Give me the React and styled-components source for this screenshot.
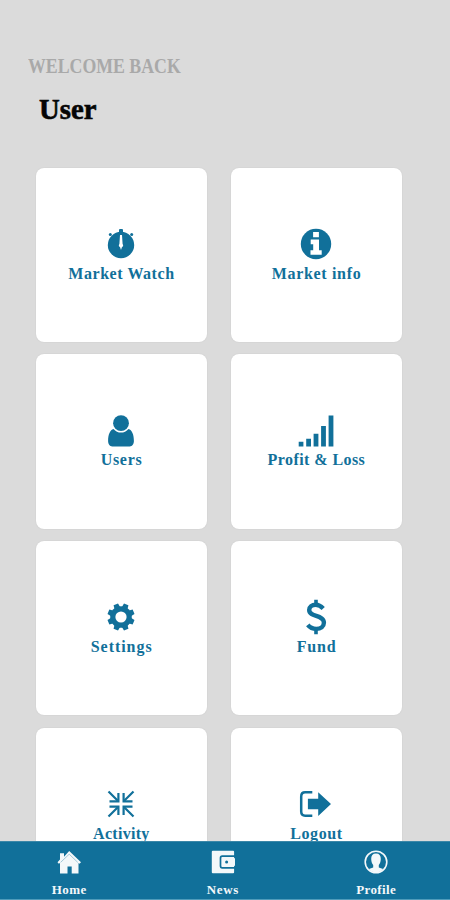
import React from "react";
import styled, { createGlobalStyle } from "styled-components";

const TEAL = "#11709a";

const GlobalStyle = createGlobalStyle`
  * { box-sizing: border-box; }
  html, body { margin: 0; padding: 0; background: #dbdbdb; }
`;

const Screen = styled.div`
  display: flex;
  flex-direction: column;
  width: 450px;
  height: 900px;
  overflow: hidden;
  background: #dbdbdb;
  font-family: "Liberation Serif", "Times New Roman", serif;
`;

const Content = styled.main`
  flex: 1;
  min-height: 0;
  overflow: hidden;
`;

const Header = styled.header`
  height: 167.5px;
  padding: 54px 0 0 28px;
`;

const Greeting = styled.p`
  margin: 0;
  width: max-content;
  font-size: 20px;
  line-height: 24px;
  font-weight: 700;
  color: #a9a9a9;
  transform: scaleX(${(p) => p.$stretch});
  transform-origin: left center;
`;

const UserName = styled.h1`
  margin: 14px 0 0 11px;
  width: max-content;
  font-size: 29px;
  line-height: 34px;
  font-weight: 700;
  color: #050505;
  -webkit-text-stroke: 0.6px #050505;
  transform: scaleX(${(p) => p.$stretch});
  transform-origin: left center;
`;

const CardGrid = styled.section`
  display: grid;
  grid-template-columns: 171px 171px;
  grid-auto-rows: 174.5px;
  gap: 12.2px 24px;
  padding-left: 35.7px;
`;

const Card = styled.div`
  display: flex;
  flex-direction: column;
  align-items: center;
  padding-top: 58.5px;
  border-radius: 8px;
  background: #fff;
  box-shadow: 0 0 1.5px rgba(0, 0, 0, 0.1);
  color: ${TEAL};
`;

const CardIcon = styled.svg`
  display: block;
  flex: none;
  width: 36px;
  height: 36px;
  overflow: visible;
`;

const CardLabel = styled.span`
  margin-top: 0.5px;
  font-size: 16px;
  line-height: 22px;
  font-weight: 700;
  white-space: nowrap;
  letter-spacing: ${(p) => p.$spacing}px;
  margin-right: ${(p) => -p.$spacing}px;
`;

const NavBar = styled.nav`
  display: flex;
  justify-content: space-between;
  flex: none;
  height: 59px;
  padding: 8px 44px 0 39px;
  border-top: 1px solid #3b87a8;
  border-bottom: 1px solid #4f9cbb;
  background: ${TEAL};
`;

const NavItem = styled.div`
  display: flex;
  flex-direction: column;
  align-items: center;
  width: 60px;
  color: #f4f8fa;
`;

const NavIcon = styled.svg`
  display: block;
  flex: none;
  width: 24px;
  height: 24px;
`;

const NavLabel = styled.span`
  margin-top: 8px;
  font-size: 13px;
  line-height: 16px;
  font-weight: 700;
  letter-spacing: ${(p) => p.$spacing}px;
  margin-right: ${(p) => -p.$spacing}px;
`;

const Stopwatch = () => (
  <g fill="currentColor">
    <circle cx="18" cy="19" r="13.2" />
    <rect x="16" y="3" width="4" height="4" rx="1" />
    <circle cx="7.3" cy="8.6" r="1.5" />
    <circle cx="28.7" cy="8.6" r="1.5" />
    <path d="M17 9h2l.6 9a2.3 2.3 0 0 1-.7 3.3L18 24l-.9-2.7a2.3 2.3 0 0 1-.7-3.3Z" fill="#fff" />
  </g>
);

const Info = () => (
  <g>
    <circle cx="18" cy="18" r="15.2" fill="currentColor" />
    <path d="M15.1 6h5.8v5.2h-5.8ZM12.7 13.6H21v10.6h2.7v4.6H12.5v-4.6h2.7v-6h-2.5Z" fill="#fff" />
  </g>
);

const Person = () => (
  <g fill="currentColor">
    <circle cx="18" cy="10.2" r="7.9" />
    <path d="M10.5 15.9c4 4.9 11 4.9 15 0 3.4 1 5.4 5.3 5.4 12.2 0 3-1.6 5.3-4.2 5.3H9.3c-2.6 0-4.2-2.3-4.2-5.3 0-6.9 2-11.2 5.4-12.2Z" />
  </g>
);

const Bars = () => (
  <path
    fill="currentColor"
    d="M.7 28.8h4.7v4.7H.7ZM8.2 25.8h4.8v7.7H8.2ZM15.6 20.8h4.8v12.7h-4.8ZM23.1 13h4.8v20.5h-4.8ZM30.6 2.5h4.8v31h-4.8Z"
  />
);

const Gear = () => (
  <g>
    <g fill="currentColor">
      <circle cx="18" cy="18" r="10.8" />
      {[22.5, 67.5, 112.5, 157.5, 202.5, 247.5, 292.5, 337.5].map((angle) => (
        <path key={angle} d="M14.9 9 15.6 4.4h4.8L21.1 9Z" transform={`rotate(${angle} 18 18)`} />
      ))}
    </g>
    <circle cx="18" cy="18" r="5.6" fill="#fff" />
  </g>
);

const Dollar = () => (
  <g fill="none" stroke="currentColor">
    <path d="M18 .7v5M18 30.3v5" strokeWidth="3.6" />
    <path
      d="M25.2 9.6C22.7 6.9 20.4 5.8 17.8 5.8c-4 0-6.6 2.1-6.6 5.2 0 7.5 14.7 4.4 14.7 12.7 0 3.8-3.2 6.2-7.6 6.2-3.5 0-6.3-1.2-8.5-4"
      strokeWidth="4.4"
    />
  </g>
);

const Compress = () => (
  <g fill="none" stroke="currentColor" strokeWidth="2.2">
    <path d="m5.5 5.5 9.3 9.3M30.5 5.5l-9.3 9.3M5.5 30.5l9.3-9.3M30.5 30.5l-9.3-9.3" />
    <path d="M15.4 7v8.4H6.5M20.6 7v8.4h8.9M15.4 29v-8.4H6.5M20.6 29v-8.4h8.9" />
  </g>
);

const Exit = () => (
  <g>
    <path
      d="M14.3 6.2H7.2c-2.6 0-4 1.5-4 4.2v15.2c0 2.7 1.4 4.2 4 4.2h7.1"
      fill="none"
      stroke="currentColor"
      strokeWidth="2.5"
    />
    <path d="M9.9 12.7h10.3V6.2L33 18 20.2 30v-6.7H9.9Z" fill="currentColor" />
  </g>
);

const House = () => (
  <g>
    <path
      d="M3 3.3h4v3.4L12.2 1 24 12.2l-1.5 1.6-1-.8V23.5h-6.8v-7h-4.2v7H3V13l-1.2.8L.5 12.2 3 9.5Z"
      fill="currentColor"
    />
    <path d="m3.6 12.4 8.6-8.2 8.6 8.2" fill="none" stroke={TEAL} strokeWidth=".6" strokeOpacity=".6" />
  </g>
);

const Wallet = () => (
  <g>
    <path d="M1.8.7h20.3q1 0 1 1v20.6q0 1-1 1H1.8q-1 0-1-1V1.7q0-1 1-1Z" fill="currentColor" />
    <path d="M24 6.2H11.2q-1.7 0-1.7 1.7v8.2q0 1.7 1.7 1.7H24" fill="none" stroke={TEAL} strokeWidth="1.7" />
    <path d="M12 8.2h12v7.6H12Z" fill="currentColor" />
    <circle cx="15.6" cy="12" r="1.5" fill={TEAL} />
  </g>
);

const Avatar = () => (
  <g>
    <circle cx="12" cy="12" r="10.8" fill="none" stroke="currentColor" strokeWidth="1.6" />
    <path
      d="M12 3.6c3.3 0 4.9 2 4.8 5.5-.1 2.9-1 4.8-2 6v2.5l4.3 1.5c-3.6 4.6-10.6 4.6-14.2 0l4.3-1.5v-2.5c-1-1.2-1.9-3.1-2-6-.1-3.5 1.5-5.5 4.8-5.5Z"
      fill="currentColor"
    />
  </g>
);

const cards = [
  { label: "Market Watch", icon: Stopwatch, spacing: 0.55 },
  { label: "Market info", icon: Info, spacing: 0.68 },
  { label: "Users", icon: Person, spacing: 0.7 },
  { label: "Profit & Loss", icon: Bars, spacing: 0.43 },
  { label: "Settings", icon: Gear, spacing: 0.95 },
  { label: "Fund", icon: Dollar, spacing: 0.8 },
  { label: "Activity", icon: Compress, spacing: 0.3 },
  { label: "Logout", icon: Exit, spacing: 0.6 },
];

const tabs = [
  { label: "Home", icon: House, spacing: 0.4 },
  { label: "News", icon: Wallet, spacing: 0.6 },
  { label: "Profile", icon: Avatar, spacing: 0.4 },
];

export default function App() {
  return (
    <Screen>
      <GlobalStyle />
      <Content>
        <Header>
          <Greeting $stretch={0.89}>WELCOME BACK</Greeting>
          <UserName $stretch={0.99}>User</UserName>
        </Header>
        <CardGrid>
          {cards.map(({ label, icon: Icon, spacing }) => (
            <Card key={label}>
              <CardIcon viewBox="0 0 36 36" aria-hidden="true">
                <Icon />
              </CardIcon>
              <CardLabel $spacing={spacing}>{label}</CardLabel>
            </Card>
          ))}
        </CardGrid>
      </Content>
      <NavBar>
        {tabs.map(({ label, icon: Icon, spacing }) => (
          <NavItem key={label}>
            <NavIcon viewBox="0 0 24 24" aria-hidden="true">
              <Icon />
            </NavIcon>
            <NavLabel $spacing={spacing}>{label}</NavLabel>
          </NavItem>
        ))}
      </NavBar>
    </Screen>
  );
}
